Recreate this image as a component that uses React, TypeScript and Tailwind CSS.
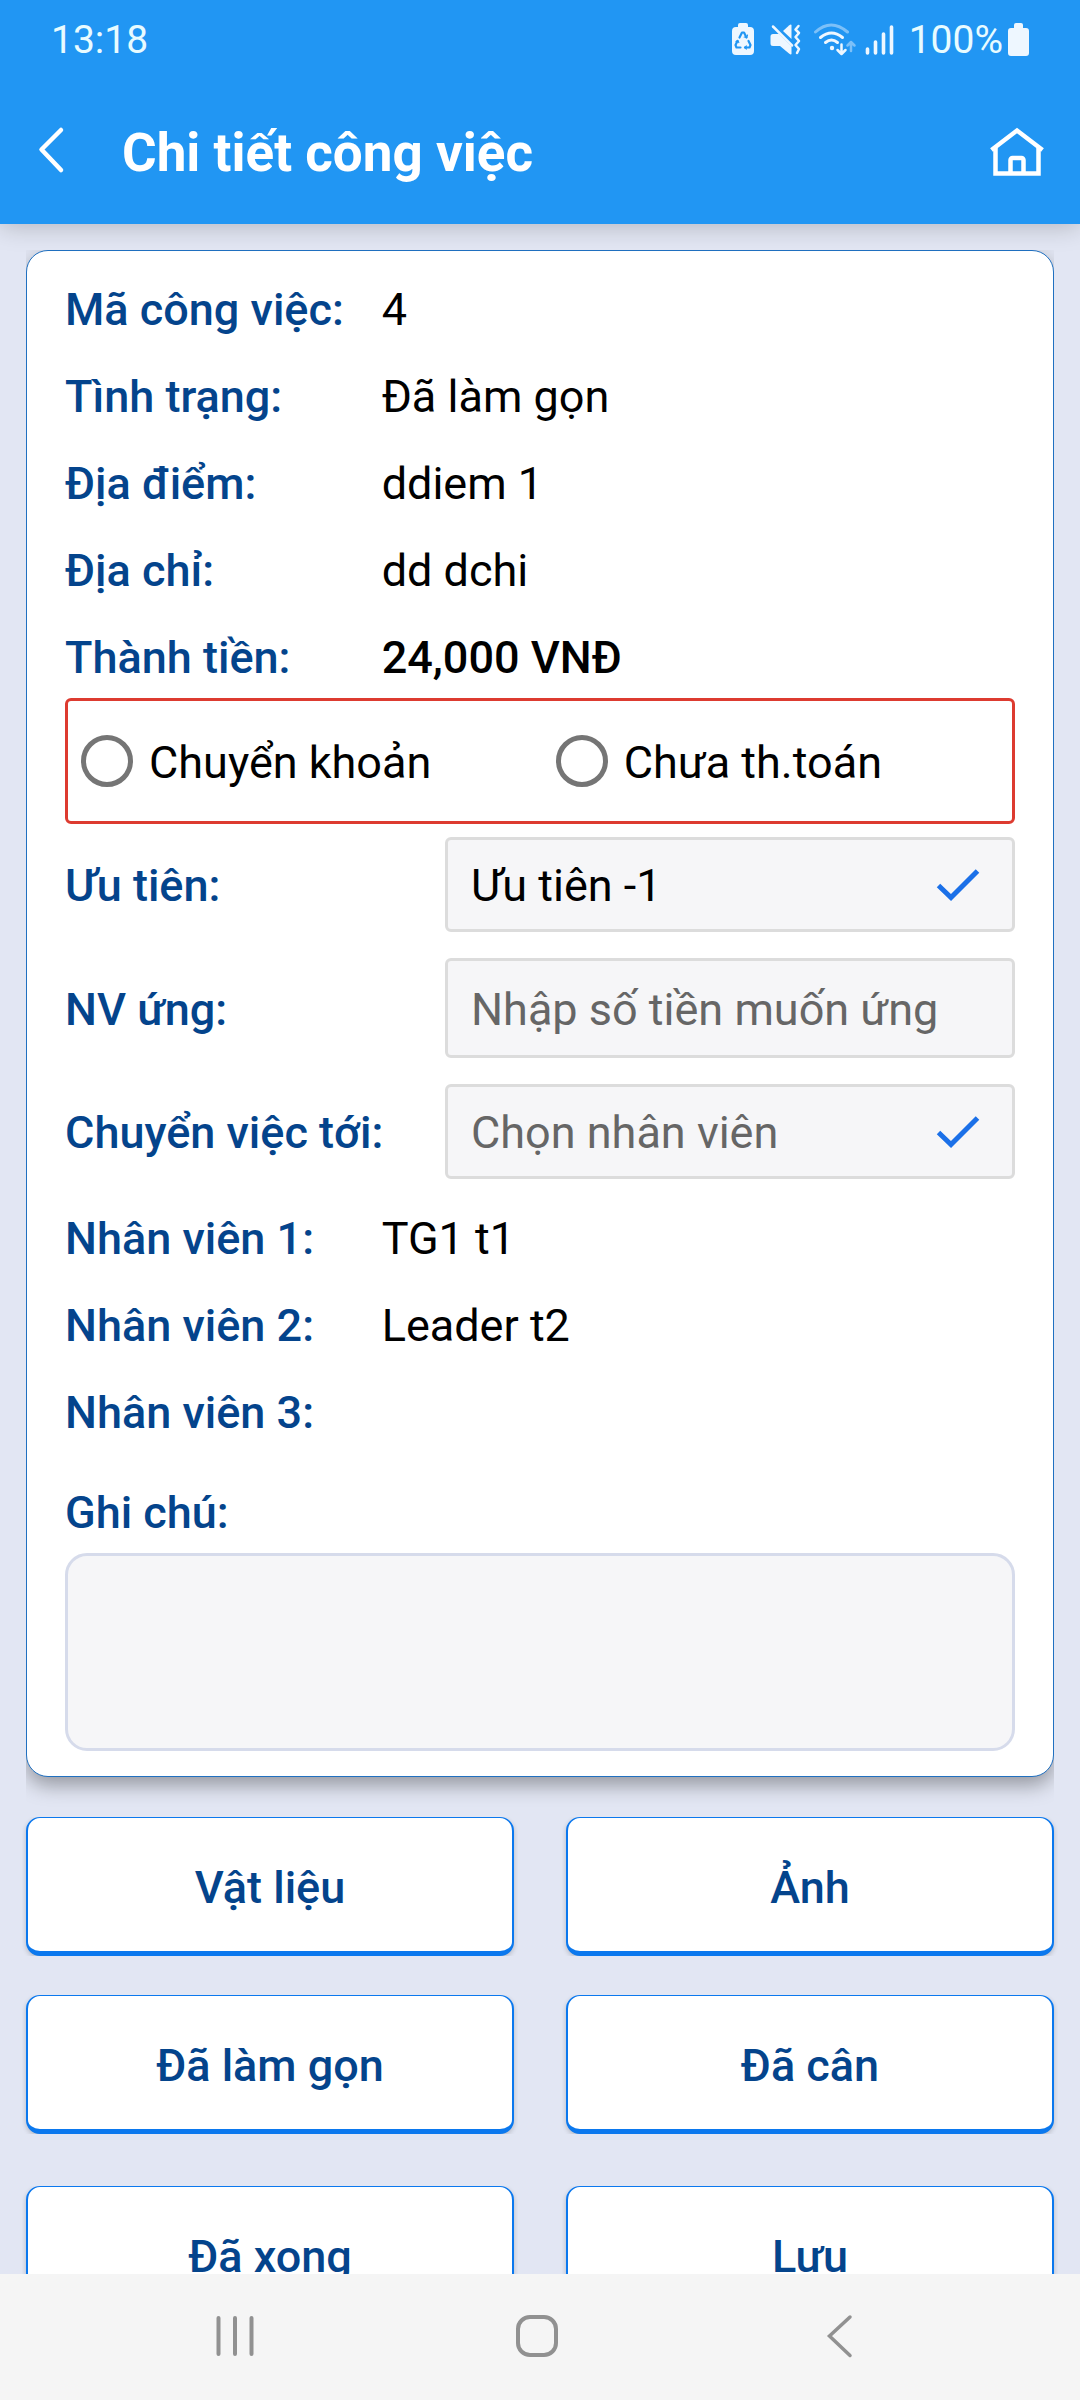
import React from "react";

const details = [
  { label: "Mã công việc:", value: "4" },
  { label: "Tình trạng:", value: "Đã làm gọn" },
  { label: "Địa điểm:", value: "ddiem 1" },
  { label: "Địa chỉ:", value: "dd dchi" },
  { label: "Thành tiền:", value: "24,000 VNĐ", strong: true },
];

const staff = [
  { label: "Nhân viên 1:", value: "TG1 t1" },
  { label: "Nhân viên 2:", value: "Leader t2" },
  { label: "Nhân viên 3:", value: "" },
];

function StatusIcons() {
  return (
    <svg width="166" height="36" viewBox="0 0 166 36" fill="none" aria-hidden="true">
      {/* battery protection */}
      <path d="M7 3a2 2 0 0 1 2-2h6a2 2 0 0 1 2 2v2h2a4 4 0 0 1 4 4v20a4 4 0 0 1-4 4H5a4 4 0 0 1-4-4V9a4 4 0 0 1 4-4h2z" fill="#eef7ff" />
      <g stroke="#2196f3" strokeWidth="2.200" strokeLinecap="round" strokeLinejoin="round">
        <path d="M8.500 15.500l2.500-5h2l2.500 5" />
        <path d="M6.500 19L4.500 23l1 2.500h4" />
        <path d="M17.500 19l2 4-1 2.500h-4.500" />
        <path d="M15.500 24l-2 1.500 2 1.500M16.500 13l-.8 2.500-2.500-.5M5 19.500l1.800-1 1 2" strokeWidth="1.200" />
      </g>
      {/* muted, vibrating speaker */}
      <path d="M60.500 3v14L52 9l6-5.500q2-1.500 2.500-.5z" fill="#eef7ff" />
      <path d="M42 12h6l12.500 12.500V32q-.5 1-2.500-.5L49 24h-7a2.500 2.500 0 0 1-2.500-2.500v-7A2.500 2.500 0 0 1 42 12z" fill="#eef7ff" />
      <path d="M42 4.500l19 19" stroke="#eef7ff" strokeWidth="2.500" strokeLinecap="round" />
      <path d="M67.500 4l-3 3.500 3.500 3.500-3.500 4 3.500 4-3.500 4 3.500 4-2 4" stroke="#eef7ff" strokeWidth="2.500" strokeLinecap="round" strokeLinejoin="round" />
      {/* wifi with transfer arrows */}
      <path d="M84.500 10q15.500-14 32 0" stroke="#7cc0f8" strokeWidth="3" strokeLinecap="round" />
      <g stroke="#eef7ff" strokeWidth="3" strokeLinecap="round" strokeLinejoin="round">
        <path d="M89.500 15.500q11-9 22 0" />
        <path d="M94.500 20.500q6-5 12 0" />
        <path d="M110.500 22.500v9M106.500 28l4 4 4-4" strokeWidth="2.500" />
      </g>
      <circle cx="101" cy="26" r="2.200" fill="#eef7ff" />
      <path d="M120 29v-9M116.500 23.500l3.500-3.500 3.500 3.500" stroke="#7cc0f8" strokeWidth="2.500" strokeLinecap="round" strokeLinejoin="round" />
      {/* signal */}
      <g stroke="#eef7ff" strokeWidth="3.600" strokeLinecap="round">
        <path d="M136.500 27v4M144.500 20v11M152.500 12v19M160.500 5v26" />
      </g>
    </svg>
  );
}

function Check() {
  return (
    <svg className="pointer-events-none absolute right-[35px] top-[30px]" width="44" height="36" viewBox="0 0 44 36" fill="none" aria-hidden="true">
      <path d="M2.500 18.500L15 30.500 41.500 4" stroke="#1b70e8" strokeWidth="5" />
    </svg>
  );
}

function DetailRow({ label, value, strong }: { label: string; value: string; strong?: boolean }) {
  return (
    <div className="flex leading-[61px]">
      <dt className="w-1/3 whitespace-nowrap font-medium text-[#04448c]">{label}</dt>
      <dd className={strong ? "flex-1 font-medium" : "flex-1"}>{value}</dd>
    </div>
  );
}

function Field({ id, label, children }: { id: string; label: string; children: React.ReactNode }) {
  return (
    <div className="flex items-center">
      <label htmlFor={id} className="w-2/5 whitespace-nowrap pt-[3px] font-medium text-[#04448c]">
        {label}
      </label>
      <div className="relative w-3/5">{children}</div>
    </div>
  );
}

function Option({ label }: { label: string }) {
  return (
    <label className="flex items-center gap-4">
      <input type="radio" name="payment" className="size-[52px] appearance-none rounded-full border-[5px] border-[#757575] checked:bg-[#1b70e8]" />
      <span className="pt-[3px]">{label}</span>
    </label>
  );
}

function ActionButton({ label }: { label: string }) {
  return (
    <button
      type="button"
      className="h-[139px] rounded-[14px] border-x-2 border-t border-b-[5px] border-[#0b78ee] bg-white pt-[7px] font-medium text-[#04448c] shadow-[0_2px_5px_rgba(0,0,0,0.2)] [clip-path:inset(0_-4px_0_-4px)]"
    >
      {label}
    </button>
  );
}

export default function App() {
  return (
    <div className="flex h-screen flex-col bg-[#e2e6f3] font-['Roboto',sans-serif] text-[45px] text-black">
      <header className="relative z-10 bg-[#2196f3] text-white shadow-[0_2px_24px_rgba(0,0,0,0.22)]">
        <div className="flex h-20 items-center justify-between pl-[51px] pr-[50px] text-[39px] text-[#e8fbff]">
          <span>13:18</span>
          <div className="flex items-center">
            <StatusIcons />
            <span className="ml-3">100%</span>
            <svg className="ml-1" width="23" height="36" viewBox="0 0 23 36" aria-hidden="true">
              <path d="M7 3a2 2 0 0 1 2-2h5a2 2 0 0 1 2 2v3h3a3 3 0 0 1 3 3v22a3 3 0 0 1-3 3H4a3 3 0 0 1-3-3V9a3 3 0 0 1 3-3h3z" fill="#eef7ff" />
            </svg>
          </div>
        </div>
        <div className="flex h-36 items-center pl-9 pr-[35px]">
          <button type="button" aria-label="Quay lại" className="mr-14 pb-1">
            <svg width="30" height="48" viewBox="0 0 30 48" fill="none">
              <path d="M25 4L5.500 23.500 25 44" stroke="white" strokeWidth="4.500" strokeLinecap="round" strokeLinejoin="round" />
            </svg>
          </button>
          <h1 className="flex-1 pt-1 text-[53px] font-bold">Chi tiết công việc</h1>
          <button type="button" aria-label="Trang chủ">
            <svg width="56" height="52" viewBox="0 0 56 52" fill="none" stroke="white" strokeWidth="4.500">
              <path d="M2.500 24L28 4.500 53.500 24" />
              <path d="M6.500 22v25.500h43V22" />
              <path d="M21.500 47V34a2 2 0 0 1 2-2h9a2 2 0 0 1 2 2v13" />
            </svg>
          </button>
        </div>
      </header>

      <main className="min-h-0 flex-1 overflow-y-auto px-[26px] pt-[26px] [scrollbar-width:none]">
        <section className="rounded-[22px] border border-[#2070c0] bg-white px-[38px] pt-7 pb-[25px] shadow-[0_8px_20px_rgba(0,0,0,0.35)] [clip-path:inset(0_0_-38px_0)]">
          <dl className="flex flex-col gap-[26px]">
            {details.map((row) => (
              <DetailRow key={row.label} {...row} />
            ))}
          </dl>

          <fieldset className="mt-[10px] grid h-[126px] grid-cols-[51%_49%] items-center rounded-md border-[3px] border-[#dd3b30] pl-[13px]">
            <Option label="Chuyển khoản" />
            <Option label="Chưa th.toán" />
          </fieldset>

          <div className="mt-[13px] flex flex-col gap-[26px]">
            <Field id="priority" label="Ưu tiên:">
              <select id="priority" className="block h-[95px] w-full appearance-none rounded-md border-[3px] border-[#dcdcdc] bg-[#f6f6f8] px-[23px] pt-[3px]">
                <option>Ưu tiên -1</option>
              </select>
              <Check />
            </Field>
            <Field id="advance" label="NV ứng:">
              <input id="advance" type="text" placeholder="Nhập số tiền muốn ứng" className="block h-[100px] w-full rounded-md border-[3px] border-[#dcdcdc] bg-[#f6f6f8] px-[23px] pt-[3px] placeholder:text-[#666666]" />
            </Field>
            <Field id="assignee" label="Chuyển việc tới:">
              <select id="assignee" className="block h-[95px] w-full appearance-none rounded-md border-[3px] border-[#dcdcdc] bg-[#f6f6f8] px-[23px] pt-[3px] text-[#666666]">
                <option>Chọn nhân viên</option>
              </select>
              <Check />
            </Field>
          </div>

          <dl className="mt-[29px] flex flex-col gap-[26px]">
            {staff.map((row) => (
              <DetailRow key={row.label} {...row} />
            ))}
          </dl>

          <label htmlFor="note" className="mt-[39px] block font-medium leading-[61px] text-[#04448c]">
            Ghi chú:
          </label>
          <textarea id="note" className="mt-[10px] block h-[198px] w-full resize-none rounded-[22px] border-[3px] border-[#d6dbeb] bg-[#f6f6f8] px-[23px] py-4" />
        </section>

        <div className="mt-10 grid grid-cols-2 gap-x-[52px] gap-y-[39px]">
          <ActionButton label="Vật liệu" />
          <ActionButton label="Ảnh" />
          <ActionButton label="Đã làm gọn" />
          <ActionButton label="Đã cân" />
        </div>
        <div className="mt-[52px] mb-[26px] grid grid-cols-2 gap-x-[52px]">
          <ActionButton label="Đã xong" />
          <ActionButton label="Lưu" />
        </div>
      </main>

      <nav className="flex h-[126px] shrink-0 items-center bg-[#f5f5f5] pl-[84px] pr-[90px]">
        <button type="button" aria-label="Ứng dụng gần đây" className="flex flex-1 justify-center">
          <svg width="44" height="48" viewBox="0 0 44 48" stroke="#919191" strokeWidth="4" strokeLinecap="round">
            <path d="M5.500 5v36M22 5v36M38.500 5v36" />
          </svg>
        </button>
        <button type="button" aria-label="Màn hình chính" className="flex flex-1 justify-center">
          <svg width="44" height="48" viewBox="0 0 44 48" fill="none">
            <rect x="3" y="4" width="38" height="38" rx="12" stroke="#919191" strokeWidth="4" />
          </svg>
        </button>
        <button type="button" aria-label="Trở về" className="flex flex-1 justify-center">
          <svg width="44" height="48" viewBox="0 0 44 48" fill="none">
            <path d="M33 4L12.500 23 33 42.500" stroke="#919191" strokeWidth="3.500" strokeLinecap="round" />
          </svg>
        </button>
      </nav>
    </div>
  );
}
